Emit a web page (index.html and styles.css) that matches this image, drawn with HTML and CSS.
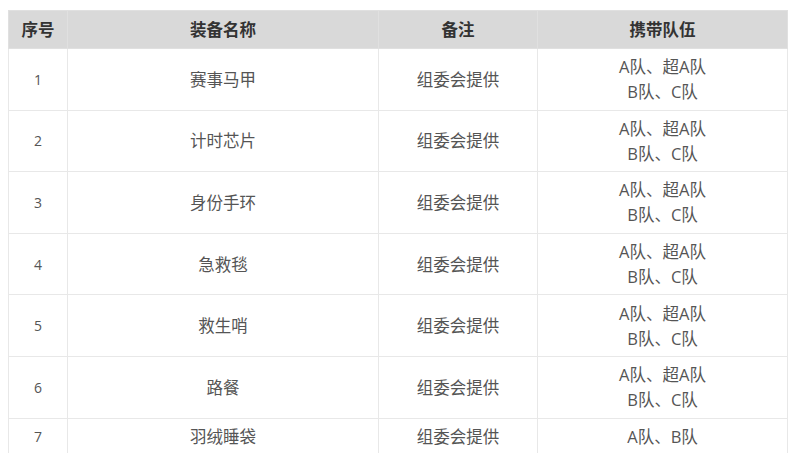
FILE: index.html
```html
<!DOCTYPE html>
<html lang="zh">
<head>
<meta charset="utf-8">
<link rel="stylesheet" href="styles.css">
</head>
<body>
<div class="wrap">
<table class="gear">
  <colgroup>
    <col class="c1"><col class="c2"><col class="c3"><col class="c4">
  </colgroup>
  <thead>
    <tr><th>序号</th><th>装备名称</th><th>备注</th><th>携带队伍</th></tr>
  </thead>
  <tbody>
    <tr><td>1</td><td>赛事马甲</td><td>组委会提供</td><td>A队、超A队<br>B队、C队</td></tr>
    <tr><td>2</td><td>计时芯片</td><td>组委会提供</td><td>A队、超A队<br>B队、C队</td></tr>
    <tr><td>3</td><td>身份手环</td><td>组委会提供</td><td>A队、超A队<br>B队、C队</td></tr>
    <tr><td>4</td><td>急救毯</td><td>组委会提供</td><td>A队、超A队<br>B队、C队</td></tr>
    <tr><td>5</td><td>救生哨</td><td>组委会提供</td><td>A队、超A队<br>B队、C队</td></tr>
    <tr><td>6</td><td>路餐</td><td>组委会提供</td><td>A队、超A队<br>B队、C队</td></tr>
    <tr><td>7</td><td>羽绒睡袋</td><td>组委会提供</td><td>A队、B队</td></tr>
  </tbody>
</table>
</div>
</body>
</html>
```
FILE: styles.css
```css
html, body {
  margin: 0;
  padding: 0;
  background: #fff;
}
.wrap {
  padding: 10px 9px 0 8px;
}
.gear {
  width: 779px;
  border-collapse: collapse;
  table-layout: fixed;
  font-family: "Open Sans", "Noto Sans CJK SC", sans-serif;
  font-size: 16.5px;
  color: #555;
}
.c1 { width: 59px; }
.c2 { width: 311px; }
.c3 { width: 159px; }
.c4 { width: 250px; }
.gear th {
  background: #d9d9d9;
  color: #333;
  font-weight: bold;
  line-height: 25px;
  padding: 6px 0;
  border: 1px solid #e0e0e0;
  text-align: center;
  vertical-align: middle;
}
.gear td {
  padding: 5.3px 0;
  border: 1px solid #e8e8e8;
  text-align: center;
  vertical-align: middle;
  line-height: 25px;
}
.gear td:first-child {
  font-size: 14px;
}
```
